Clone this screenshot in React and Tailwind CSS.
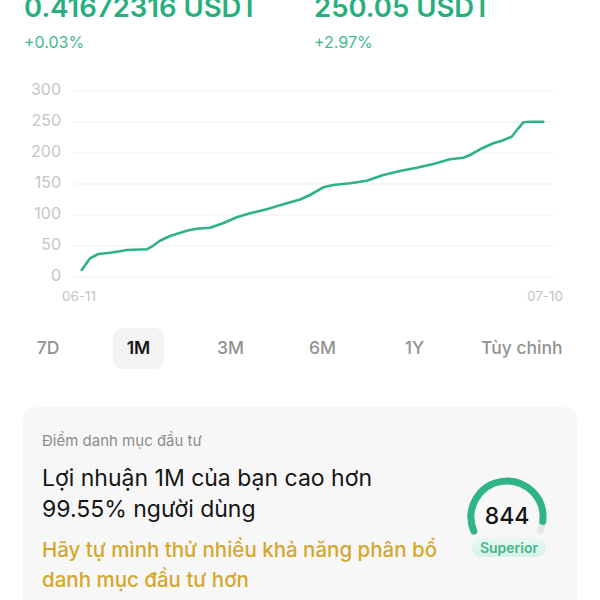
import React from 'react';

const points = [
  [81.7, 190], [90, 178.3], [98.3, 174], [110, 172.7], [120, 171.3], [126.7, 170],
  [146.7, 169.3], [151.7, 166.7], [160, 160.7], [170, 156], [186.7, 150.7], [196.7, 148.7],
  [210, 147.7], [223, 143.3], [236.7, 137.3], [250, 133.3], [266.7, 129.3], [283.3, 124.3],
  [300, 119.5], [310, 115], [323.3, 107.3], [333.3, 105], [350, 103.3], [366.7, 100.7],
  [383.3, 95], [400, 91], [416.7, 87.7], [433.3, 84], [450, 79.3], [463.3, 77.7],
  [470, 75], [480, 69.3], [493.3, 63.3], [501.7, 60.7], [511.7, 56.7], [518.3, 48.3],
  [523.3, 42.3], [530, 41.7], [543.3, 41.7],
];

const gridLines = [
  { label: '300', y: 11 },
  { label: '250', y: 42 },
  { label: '200', y: 73 },
  { label: '150', y: 104 },
  { label: '100', y: 135 },
  { label: '50', y: 166 },
  { label: '0', y: 197 },
];

const tabs = ['7D', '1M', '3M', '6M', '1Y', 'Tùy chỉnh'];

const ProfitChart = () => (
  <svg width="600" height="230" viewBox="0 0 600 230" className="block">
    {gridLines.map((g) => (
      <g key={g.label}>
        <line x1="74" x2="553" y1={g.y} y2={g.y} stroke="#efefef" strokeWidth="1" />
        <text
          x="61"
          y={g.y}
          textAnchor="end"
          dominantBaseline="middle"
          fontSize="16"
          fill="#c6c6c6"
          fontFamily="Inter, sans-serif"
        >
          {g.label}
        </text>
      </g>
    ))}
    <polyline
      points={points.map((p) => p.join(',')).join(' ')}
      fill="none"
      stroke="#2fb383"
      strokeWidth="2.6"
      strokeLinejoin="round"
      strokeLinecap="round"
    />
    <text x="62" y="217" dominantBaseline="middle" fontSize="13.5" fill="#c4c4c4" fontFamily="Inter, sans-serif">
      06-11
    </text>
    <text x="563" y="217" textAnchor="end" dominantBaseline="middle" fontSize="13.5" fill="#c4c4c4" fontFamily="Inter, sans-serif">
      07-10
    </text>
  </svg>
);

const ScoreGauge = () => (
  <div className="relative w-[80px] h-[80px] shrink-0">
    <svg width="80" height="80" viewBox="0 0 80 80" className="absolute inset-0">
      <path d="M 75.73 44.39 A 36 36 0 0 1 73.14 54.07" fill="none" stroke="#e6e6e6" strokeWidth="7" strokeLinecap="round" />
      <path d="M 6.86 54.07 A 36 36 0 1 1 75.73 44.39" fill="none" stroke="#2fb585" strokeWidth="7" strokeLinecap="round" />
    </svg>
    <div className="absolute inset-0 flex items-center justify-center pb-[2px] text-[23px] font-medium text-[#141414]">
      844
    </div>
    <div className="absolute left-[5px] top-[61px] w-[74px] h-[19px] rounded-full bg-gradient-to-b from-[#e8f8f1] to-[#d6f2e6] flex items-center justify-center text-[14px] font-semibold text-[#47b68b] leading-none">
      Superior
    </div>
  </div>
);

export default function App() {
  return (
    <div className="w-[600px] h-[600px] overflow-hidden bg-white font-['Inter',sans-serif]">
      {/* balances */}
      <div className="flex pl-[24px] mt-[-9px]">
        <div className="w-[290px]">
          <div className="text-[27.5px] leading-[32px] font-semibold text-[#27b07e]">0.41672316 USDT</div>
          <div className="mt-[8px] text-[16px] leading-[22px] text-[#3fb98b]">+0.03%</div>
        </div>
        <div>
          <div className="text-[27.5px] leading-[32px] font-semibold text-[#27b07e]">250.05 USDT</div>
          <div className="mt-[8px] text-[16px] leading-[22px] text-[#3fb98b]">+2.97%</div>
        </div>
      </div>

      {/* chart */}
      <div className="mt-[27px]">
        <ProfitChart />
      </div>

      {/* range tabs */}
      <div className="flex items-center gap-[41px] pl-[24px] mt-[18px]">
        {tabs.map((t) => (
          <div
            key={t}
            className={`h-[41px] flex items-center justify-center rounded-[9px] text-[17.5px] ${
              t === '7D' ? 'w-[48px]' : t === 'Tùy chỉnh' ? 'px-0' : 'w-[51px]'
            } ${t === '1M' ? 'bg-[#f3f3f3] font-semibold text-[#161616]' : 'font-medium text-[#929292]'}`}
          >
            {t}
          </div>
        ))}
      </div>

      {/* portfolio score card */}
      <div className="mx-[23px] mt-[38px] rounded-[14px] bg-[#f7f7f7] pl-[19px] pr-[11px] pt-[24px] pb-[20px]">
        <div className="text-[15px] leading-[20px] text-[#8c8c8c]">Điểm danh mục đầu tư</div>
        <div className="flex mt-[12px]">
          <div className="w-[410px]">
            <div className="text-[23px] leading-[31px] text-[#151515]">
              Lợi nhuận 1M của bạn cao hơn
              <br />
              99.55% người dùng
            </div>
            <div className="mt-[10px] text-[20.5px] leading-[30px] font-medium text-[#d4a82c]">
              Hãy tự mình thử nhiều khả năng phân bổ danh mục đầu tư hơn
            </div>
          </div>
          <div className="ml-auto mr-[19px] mt-[14px]">
            <ScoreGauge />
          </div>
        </div>
      </div>
    </div>
  );
}
